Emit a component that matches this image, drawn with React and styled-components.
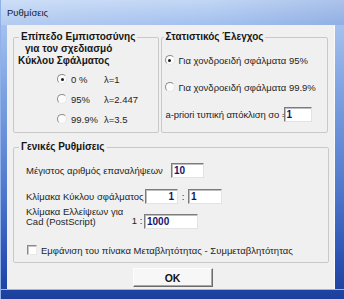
import React from 'react';
import styled, { createGlobalStyle } from 'styled-components';

const GlobalStyle = createGlobalStyle`
  html, body { margin: 0; padding: 0; background: #2a52b3; }
  body { font-family: "Liberation Sans", Arial, sans-serif; }
`;

const Window = styled.div`
  width: 344px;
  height: 299px;
  box-sizing: border-box;
  display: flex;
  flex-direction: column;
  background: linear-gradient(180deg, #c2d7f5 0px, #a6c2ef 22px, #7ea3e2 90px, #4f78cc 190px, #2a52b4 260px, #1c3f9c 299px);
  border-left: 1px solid #8fb0e8;
  overflow: hidden;
`;

const TitleBar = styled.div`
  height: 25px;
  flex: none;
  display: flex;
  align-items: center;
  padding-left: 6px;
  font-size: 9.5px;
  color: #1b1b1b;
  background: linear-gradient(90deg, rgba(255, 255, 255, 0.18), rgba(255, 255, 255, 0) 60%, rgba(40, 80, 170, 0.15));
`;

const Client = styled.div`
  width: 328px;
  height: 264px;
  margin-left: 6px;
  box-sizing: border-box;
  padding: 6px 6px 0 6px;
  background: #f0f0f0;
  border-right: 1px solid #fafafa;
  display: flex;
  flex-direction: column;
  color: #1e1e1e;
  font-size: 9.5px;
  white-space: nowrap;
`;

const TopRow = styled.div`
  display: flex;
  gap: 2px;
`;

const Group = styled.fieldset`
  margin: ${p => p.$mt || 0}px 0 0 0;
  padding: 0 0 0 ${p => p.$pad || 0}px;
  box-sizing: border-box;
  width: ${p => p.$w}px;
  height: ${p => p.$h}px;
  min-width: 0;
  border: 1px solid #c9c9c9;
  border-radius: 2px;
  display: flex;
  flex-direction: column;
`;

const Legend = styled.legend`
  margin-left: ${p => p.$ml || 0}px;
  padding: 0 2px;
  font-weight: bold;
  font-size: 10px;
  line-height: 12px;
  color: #161616;
`;

const SubLegend = styled.div`
  font-weight: bold;
  font-size: 10px;
  line-height: 12px;
  padding-left: ${p => p.$indent}px;
  color: #161616;
`;

const LevelRow = styled.div`
  display: flex;
  align-items: center;
  height: 20px;
  margin-top: ${p => p.$mt || 0}px;
  padding-left: 43px;
`;

const Radio = styled.span`
  flex: none;
  width: 10px;
  height: 10px;
  box-sizing: border-box;
  border-radius: 50%;
  border: 1px solid;
  border-color: #8c8c8c #e6e6e6 #e6e6e6 #8c8c8c;
  background: #fbfbfb;
  display: inline-flex;
  align-items: center;
  justify-content: center;
  &::after {
    content: '';
    width: 3px;
    height: 3px;
    border-radius: 50%;
    background: ${p => (p.$checked ? '#1a1a1a' : 'transparent')};
  }
`;

const LevelLabel = styled.span`
  width: 33px;
  margin-left: 4px;
`;

const CheckRow = styled.div`
  display: flex;
  align-items: center;
  height: 14px;
  margin-top: ${p => p.$mt || 0}px;
  padding-left: ${p => p.$pl || 0}px;
  gap: 4px;
`;

const FieldRow = styled.div`
  display: flex;
  align-items: ${p => p.$align || 'center'};
  margin-top: ${p => p.$mt || 0}px;
  padding-left: ${p => p.$pl || 0}px;
`;

const Label = styled.span`
  width: ${p => p.$w}px;
  flex: none;
  line-height: ${p => p.$lh || 12}px;
  letter-spacing: ${p => p.$ls || 0}px;
`;

const Sep = styled.span`
  width: ${p => p.$w}px;
  flex: none;
  text-align: center;
  margin-top: ${p => p.$mt || 0}px;
`;

const Field = styled.div`
  flex: none;
  width: ${p => p.$w}px;
  height: 15px;
  box-sizing: border-box;
  margin-top: ${p => p.$mt || 0}px;
  border: 1px solid;
  border-color: #7c7c7c #e3e3e3 #e3e3e3 #7c7c7c;
  box-shadow: inset 1px 1px 0 #bdbdbd;
  background: #fff;
  color: #14146e;
  font-weight: bold;
  font-size: 10px;
  line-height: 13px;
  padding: 0 3px 0 2px;
  text-align: ${p => p.$right ? 'right' : 'left'};
`;

const Box = styled.span`
  flex: none;
  width: 10px;
  height: 10px;
  box-sizing: border-box;
  border: 1px solid;
  border-color: #8a8a8a #e8e8e8 #e8e8e8 #8a8a8a;
  box-shadow: inset 1px 1px 0 #c4c4c4;
  background: #fff;
`;

const ButtonRow = styled.div`
  display: flex;
  justify-content: center;
  padding-left: 4px;
  margin-top: 5px;
`;

const Button = styled.button`
  width: 80px;
  height: 19px;
  box-sizing: border-box;
  border: 1px solid;
  border-color: #fdfdfd #6b6b6b #6b6b6b #fdfdfd;
  box-shadow: inset -1px -1px 0 #a8a8a8;
  background: #f7f7f7;
  font-family: "Liberation Sans", Arial, sans-serif;
  font-weight: bold;
  font-size: 10.5px;
  color: #111;
  padding: 0;
`;

const BottomFrame = styled.div`
  flex: 1;
  border-top: 1px solid #9bb8ea;
`;

const levels = [
  { label: '0 %', lambda: 'λ=1', checked: true, mt: 2 },
  { label: '95%', lambda: 'λ=2.447' },
  { label: '99.9%', lambda: 'λ=3.5' },
];

export default function App() {
  return (
    <>
      <GlobalStyle />
      <Window>
        <TitleBar>Ρυθμίσεις</TitleBar>
        <Client>
          <TopRow>
            <Group $w={146} $h={102}>
              <Legend $ml={5}>Επίπεδο Εμπιστοσύνης</Legend>
              <SubLegend $indent={11}>για τον σχεδιασμό</SubLegend>
              <SubLegend $indent={4}>Κύκλου Σφάλματος</SubLegend>
              {levels.map(l => (
                <LevelRow key={l.label} $mt={l.mt}>
                  <Radio $checked={l.checked} />
                  <LevelLabel>{l.label}</LevelLabel>
                  <span>{l.lambda}</span>
                </LevelRow>
              ))}
            </Group>
            <Group $w={168} $h={102} $pad={3}>
              <Legend $ml={-1}>Στατιστικός Έλεγχος</Legend>
              <CheckRow $mt={10}>
                <Radio $checked />
                <span>Για χονδροειδή σφάλματα 95%</span>
              </CheckRow>
              <CheckRow $mt={13}>
                <Radio />
                <span>Για χονδροειδή σφάλματα 99.9%</span>
              </CheckRow>
              <FieldRow $mt={13} $pl={1}>
                <Label $w={118} $ls={-0.1}>a-priori τυπική απόκλιση σο =</Label>
                <Field $w={28}>1</Field>
              </FieldRow>
            </Group>
          </TopRow>
          <Group $w={316} $h={122} $mt={8}>
            <Legend $ml={5}>Γενικές Ρυθμίσεις</Legend>
            <FieldRow $mt={10} $pl={12}>
              <Label $w={145}>Μέγιστος αριθμός επαναλήψεων</Label>
              <Field $w={33}>10</Field>
            </FieldRow>
            <FieldRow $mt={11} $pl={12}>
              <Label $w={119}>Κλίμακα Κύκλου σφάλματος</Label>
              <Field $w={33} $right>1</Field>
              <Sep $w={10}>:</Sep>
              <Field $w={34}>1</Field>
            </FieldRow>
            <FieldRow $mt={3} $pl={12} $align="flex-start">
              <Label $w={104} $lh={9.5}>
                Κλίμακα Ελλείψεων για
                <br />
                Cad (PostScript)
              </Label>
              <Sep $w={14} $mt={8}>1 :</Sep>
              <Field $w={54} $mt={7}>1000</Field>
            </FieldRow>
            <CheckRow $mt={14} $pl={13}>
              <Box />
              <span>Εμφάνιση του πίνακα Μεταβλητότητας - Συμμεταβλητότητας</span>
            </CheckRow>
          </Group>
          <ButtonRow>
            <Button>OK</Button>
          </ButtonRow>
        </Client>
        <BottomFrame />
      </Window>
    </>
  );
}
